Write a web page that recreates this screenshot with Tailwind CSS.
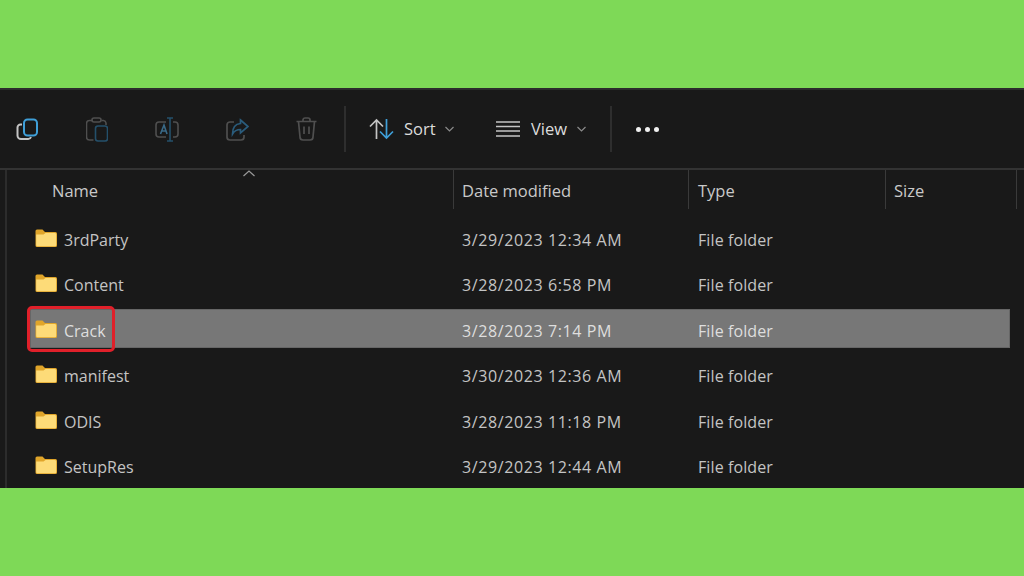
<!DOCTYPE html>
<html lang="en">
<head>
  <meta charset="UTF-8" />
  <title>File Explorer</title>
  <script src="https://cdn.jsdelivr.net/npm/@tailwindcss/browser@4"></script>
</head>
<body class="bg-[#7ed957] w-[1024px] h-[576px] overflow-hidden font-['Open_Sans','Noto_Sans',sans-serif]">
  <div class="h-[88px]"></div>
  <div class="relative h-[400px] bg-[#191919] border-t-2 border-[#2c2c2c] overflow-hidden">

    <!-- toolbar -->
    <div class="flex items-center h-[80px] pl-[16px] border-b-2 border-[#333333]">
      <div class="w-[70px]">
        <svg class="w-[23px] h-[23px]" viewBox="0 0 23 23" fill="none" stroke-width="2">
          <path d="M6 6.500H4.500A3 3 0 0 0 1.500 9.500V17.500A3.500 3.500 0 0 0 5 21H12A3 3 0 0 0 15 19" stroke="#c4c4c4"/>
          <rect x="8" y="1.500" width="13" height="16" rx="3.500" stroke="#3f9fd8"/>
        </svg>
      </div>
      <div class="w-[69px]">
        <svg class="w-[22px] h-[25px]" viewBox="0.500 0 22 25" fill="none" stroke-width="1.600">
          <path d="M7 3.500H4A3 3 0 0 0 1 6.500V20A3 3 0 0 0 4 23H8M16 3.500H18A3 3 0 0 1 20.500 6V8" stroke="#4f4f4f"/>
          <rect x="6.500" y="1" width="9" height="4" rx="2" stroke="#4f4f4f"/>
          <rect x="10" y="9" width="12" height="15" rx="2.500" stroke="#24506b"/>
        </svg>
      </div>
      <div class="w-[71px]">
        <svg class="w-[24px] h-[25px]" viewBox="0 0 24 25" fill="none" stroke-width="1.600">
          <path d="M11 5H4A3 3 0 0 0 1 8V17A3 3 0 0 0 4 20H11M18 5H20A3 3 0 0 1 23 8V17A3 3 0 0 1 20 20H18" stroke="#4f4f4f"/>
          <path d="M12 1H18M15 1V24M12 24H18" stroke="#24506b"/>
          <path d="M5.500 17L9 8L12 17M6.500 14H11" stroke="#3a6a88"/>
        </svg>
      </div>
      <div class="w-[70px]">
        <svg class="w-[23px] h-[23px]" viewBox="0 0 23 23" fill="none" stroke-width="1.700">
          <path d="M8 4H4A3 3 0 0 0 1 7V19A3 3 0 0 0 4 22H15A3 3 0 0 0 18 19V17" stroke="#4f4f4f"/>
          <path d="M14.500 2L22 8.500L14.500 15V11.500C11 11.500 8.500 12.500 6.500 16C6.500 10 9.500 6 14.500 5.500Z" stroke="#2a5c7c"/>
        </svg>
      </div>
      <div class="w-[48px]">
        <svg class="w-[22px] h-[24px]" viewBox="0.500 0 22 24" fill="none" stroke="#4f4f4f" stroke-width="1.700">
          <path d="M1 4.500H21M7.500 4.500V3A2 2 0 0 1 9.500 1H12.500A2 2 0 0 1 14.500 3V4.500M3 4.500L4.500 20A3 3 0 0 0 7.500 23H14.500A3 3 0 0 0 17.500 20L19 4.500M8.500 9.500V17M13.500 9.500V17"/>
        </svg>
      </div>
      <div class="w-[2px] h-[46px] bg-[#2e2e2e] mr-[23px]"></div>
      <svg class="w-[25px] h-[22px] mr-[10px]" viewBox="0 0 25 22" fill="none" stroke-width="1.700">
        <path d="M7.500 21V2M1 8.500L7.500 2L14 8.500" stroke="#c4c4c4"/>
        <path d="M17.500 1V20M11 13.500L17.500 20L24 13.500" stroke="#3f9fd8"/>
      </svg>
      <span class="text-[#dcdcdc] text-[16.500px] w-[41px]">Sort</span>
      <svg class="w-[9px] h-[6px] mr-[42px]" viewBox="0 0 9 6" fill="none" stroke="#8a8a8a" stroke-width="1.200"><path d="M.5 1L4.500 5L8.500 1"/></svg>
      <svg class="w-[24px] h-[16px] mr-[11px]" viewBox="0 0 24 16" fill="none" stroke="#c4c4c4" stroke-width="1.300"><path d="M0 1H24M0 5.500H24M0 10H24M0 15H24"/></svg>
      <span class="text-[#dcdcdc] text-[16.500px] w-[46px]">View</span>
      <svg class="w-[9px] h-[6px] mr-[24px]" viewBox="0 0 9 6" fill="none" stroke="#8a8a8a" stroke-width="1.200"><path d="M.5 1L4.500 5L8.500 1"/></svg>
      <div class="w-[2px] h-[46px] bg-[#2e2e2e] mr-[24px]"></div>
      <div class="flex gap-[4px]">
        <div class="w-[5px] h-[5px] rounded-full bg-[#f0f0f0]"></div>
        <div class="w-[5px] h-[5px] rounded-full bg-[#f0f0f0]"></div>
        <div class="w-[5px] h-[5px] rounded-full bg-[#f0f0f0]"></div>
      </div>
    </div>

    <div class="border-l-2 border-[#2c2c2c] ml-[5px] h-full">
      <!-- column headers -->
      <div class="grid grid-cols-[446px_235px_197px_132px] h-[39px] text-[16.500px] text-[#c9c9c9]">
        <div class="pl-[45px] pt-[9px]">Name</div>
        <div class="border-l border-[#3a3a3a] pl-[8px] pt-[9px]">Date modified</div>
        <div class="border-l border-[#3a3a3a] pl-[9px] pt-[9px]">Type</div>
        <div class="border-x border-[#3a3a3a] pl-[8px] pt-[9px]">Size</div>
      </div>

      <!-- rows -->
      <div class="pl-[23px] pt-[6px] text-[16px] text-[#c4c4c4]">
        <div class="h-[45.500px] flex items-center">
          <div class="w-[980px] h-[39px] grid grid-cols-[423px_235px_197px_125px] items-center border border-transparent">
            <div class="flex items-center pt-[4px]">
              <svg class="w-[22px] h-[18px] ml-[4px] mr-[7px] -mt-[4px]" viewBox="0 0 22 18"><path d="M.5 2A1.500 1.500 0 0 1 2 .5H7.500L10 3H20.500A1.500 1.500 0 0 1 22 4.500V16.500A1.500 1.500 0 0 1 20.500 18H2A1.500 1.500 0 0 1 .5 16.500Z" fill="#e0a52a"/><path d="M1.200 5.500H8.500L10.500 4H20A1.500 1.500 0 0 1 21.200 5.500V16A1.200 1.200 0 0 1 20 17.200H2.400A1.200 1.200 0 0 1 1.200 16Z" fill="#fddb78"/></svg>
              <span>3rdParty</span>
            </div>
            <div class="pl-[8px] pt-[4px] tracking-[0.600px]">3/29/2023 12:34 AM</div>
            <div class="pl-[9px] pt-[4px] tracking-[0.100px]">File folder</div>
          </div>
        </div>
        <div class="h-[45.500px] flex items-center">
          <div class="w-[980px] h-[39px] grid grid-cols-[423px_235px_197px_125px] items-center border border-transparent">
            <div class="flex items-center pt-[4px]">
              <svg class="w-[22px] h-[18px] ml-[4px] mr-[7px] -mt-[4px]" viewBox="0 0 22 18"><path d="M.5 2A1.500 1.500 0 0 1 2 .5H7.500L10 3H20.500A1.500 1.500 0 0 1 22 4.500V16.500A1.500 1.500 0 0 1 20.500 18H2A1.500 1.500 0 0 1 .5 16.500Z" fill="#e0a52a"/><path d="M1.200 5.500H8.500L10.500 4H20A1.500 1.500 0 0 1 21.200 5.500V16A1.200 1.200 0 0 1 20 17.200H2.400A1.200 1.200 0 0 1 1.200 16Z" fill="#fddb78"/></svg>
              <span>Content</span>
            </div>
            <div class="pl-[8px] pt-[4px] tracking-[0.600px]">3/28/2023 6:58 PM</div>
            <div class="pl-[9px] pt-[4px] tracking-[0.100px]">File folder</div>
          </div>
        </div>
        <div class="h-[45.500px] flex items-center">
          <div class="w-[980px] h-[39px] grid grid-cols-[423px_235px_197px_125px] items-center bg-[#777777] border border-[#666666] text-[#dedede]">
            <div class="flex items-center pt-[4px]">
              <svg class="w-[22px] h-[18px] ml-[4px] mr-[7px] -mt-[4px]" viewBox="0 0 22 18"><path d="M.5 2A1.500 1.500 0 0 1 2 .5H7.500L10 3H20.500A1.500 1.500 0 0 1 22 4.500V16.500A1.500 1.500 0 0 1 20.500 18H2A1.500 1.500 0 0 1 .5 16.500Z" fill="#e0a52a"/><path d="M1.200 5.500H8.500L10.500 4H20A1.500 1.500 0 0 1 21.200 5.500V16A1.200 1.200 0 0 1 20 17.200H2.400A1.200 1.200 0 0 1 1.200 16Z" fill="#fddb78"/></svg>
              <span>Crack</span>
            </div>
            <div class="pl-[8px] pt-[4px] tracking-[0.600px]">3/28/2023 7:14 PM</div>
            <div class="pl-[9px] pt-[4px] tracking-[0.100px]">File folder</div>
          </div>
        </div>
        <div class="h-[45.500px] flex items-center">
          <div class="w-[980px] h-[39px] grid grid-cols-[423px_235px_197px_125px] items-center border border-transparent">
            <div class="flex items-center pt-[4px]">
              <svg class="w-[22px] h-[18px] ml-[4px] mr-[7px] -mt-[4px]" viewBox="0 0 22 18"><path d="M.5 2A1.500 1.500 0 0 1 2 .5H7.500L10 3H20.500A1.500 1.500 0 0 1 22 4.500V16.500A1.500 1.500 0 0 1 20.500 18H2A1.500 1.500 0 0 1 .5 16.500Z" fill="#e0a52a"/><path d="M1.200 5.500H8.500L10.500 4H20A1.500 1.500 0 0 1 21.200 5.500V16A1.200 1.200 0 0 1 20 17.200H2.400A1.200 1.200 0 0 1 1.200 16Z" fill="#fddb78"/></svg>
              <span>manifest</span>
            </div>
            <div class="pl-[8px] pt-[4px] tracking-[0.600px]">3/30/2023 12:36 AM</div>
            <div class="pl-[9px] pt-[4px] tracking-[0.100px]">File folder</div>
          </div>
        </div>
        <div class="h-[45.500px] flex items-center">
          <div class="w-[980px] h-[39px] grid grid-cols-[423px_235px_197px_125px] items-center border border-transparent">
            <div class="flex items-center pt-[4px]">
              <svg class="w-[22px] h-[18px] ml-[4px] mr-[7px] -mt-[4px]" viewBox="0 0 22 18"><path d="M.5 2A1.500 1.500 0 0 1 2 .5H7.500L10 3H20.500A1.500 1.500 0 0 1 22 4.500V16.500A1.500 1.500 0 0 1 20.500 18H2A1.500 1.500 0 0 1 .5 16.500Z" fill="#e0a52a"/><path d="M1.200 5.500H8.500L10.500 4H20A1.500 1.500 0 0 1 21.200 5.500V16A1.200 1.200 0 0 1 20 17.200H2.400A1.200 1.200 0 0 1 1.200 16Z" fill="#fddb78"/></svg>
              <span>ODIS</span>
            </div>
            <div class="pl-[8px] pt-[4px] tracking-[0.600px]">3/28/2023 11:18 PM</div>
            <div class="pl-[9px] pt-[4px] tracking-[0.100px]">File folder</div>
          </div>
        </div>
        <div class="h-[45.500px] flex items-center">
          <div class="w-[980px] h-[39px] grid grid-cols-[423px_235px_197px_125px] items-center border border-transparent">
            <div class="flex items-center pt-[4px]">
              <svg class="w-[22px] h-[18px] ml-[4px] mr-[7px] -mt-[4px]" viewBox="0 0 22 18"><path d="M.5 2A1.500 1.500 0 0 1 2 .5H7.500L10 3H20.500A1.500 1.500 0 0 1 22 4.500V16.500A1.500 1.500 0 0 1 20.500 18H2A1.500 1.500 0 0 1 .5 16.500Z" fill="#e0a52a"/><path d="M1.200 5.500H8.500L10.500 4H20A1.500 1.500 0 0 1 21.200 5.500V16A1.200 1.200 0 0 1 20 17.200H2.400A1.200 1.200 0 0 1 1.200 16Z" fill="#fddb78"/></svg>
              <span>SetupRes</span>
            </div>
            <div class="pl-[8px] pt-[4px] tracking-[0.600px]">3/29/2023 12:44 AM</div>
            <div class="pl-[9px] pt-[4px] tracking-[0.100px]">File folder</div>
          </div>
        </div>
      </div>
    </div>

    <!-- sort caret over the header -->
    <svg class="absolute left-[243px] top-[80px] w-[12px] h-[7px]" viewBox="0 0 12 7" fill="none" stroke="#9a9a9a" stroke-width="1.200"><path d="M.5 6L6 1L11.500 6"/></svg>
    <!-- red highlight box -->
    <div class="absolute left-[27px] top-[216px] w-[88px] h-[46px] rounded-[5px] border-[3px] border-[#e0202a]"></div>
  </div>
  <div class="h-[88px]"></div>
</body>
</html>
